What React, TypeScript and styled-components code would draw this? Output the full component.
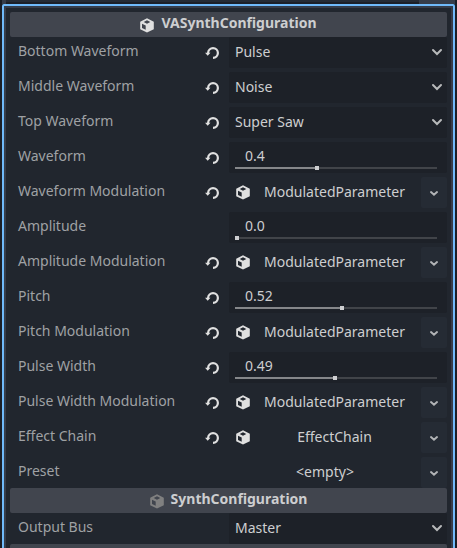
import React from "react";
import styled, { createGlobalStyle } from "styled-components";

const GlobalStyle = createGlobalStyle`
  * { box-sizing: border-box; }
  body {
    margin: 0;
    overflow: hidden;
    background: #1b1f27;
    font: 14px/20px "Noto Sans", sans-serif;
    color: #cdced0;
  }
`;

const Window = styled.div`
  width: 457px;
  height: 548px;
  overflow: hidden;
  padding: 0 2px;
  background: #1a1e26;
`;

const TabStrip = styled.div`
  height: 4px;
  display: flex;
  justify-content: space-between;
  background: linear-gradient(#252b35 50%, #1c2028 50%);
`;

const TabEdge = styled.div<{ $width: number }>`
  width: ${(p) => p.$width}px;
  background: #363d4a;
`;

const Dock = styled.main`
  height: 560px;
  border: 2px solid #70bafa;
  border-radius: 2px;
  background: #363d4a;
  padding: 2px 2px 0;
`;

const Content = styled.div`
  height: 100%;
  padding: 4px;
  background: #21262e;
`;

const Header = styled.header`
  height: 25px;
  display: flex;
  justify-content: center;
  gap: 7px;
  border-radius: 2px;
  background: #41454e;
  font-weight: 700;
  line-height: 22px;

  svg { margin-top: 6px; }
`;

const Rows = styled.section`
  display: flex;
  flex-direction: column;
  gap: 4px;
`;

const Row = styled.div`
  height: 31px;
  display: grid;
  grid-template-columns: 194px 25px 218px;
`;

const Label = styled.span`
  padding: 4px 0 0 8px;
  color: #9fa1a4;
  white-space: nowrap;
`;

const Reset = styled.span`
  height: 31px;
  display: flex;
  align-items: center;
`;

const Field = styled.div`
  height: 31px;
  border-radius: 2px;
  background: #1d2128;
  padding: 5px 4px 0 6px;
`;

const Select = styled(Field)`
  display: flex;
  justify-content: space-between;

  svg { margin-top: 2px; }
`;

const Spin = styled(Field)`
  padding: 4px 10px 0 6px;
`;

const Amount = styled.div`
  height: 20px;
  padding-left: 10px;
`;

const Track = styled.div`
  height: 2px;
  margin-top: 1px;
  display: flex;
  align-items: center;
  background: #414449;
`;

const Fill = styled.div`
  height: 2px;
  background: #85878a;
`;

const Grabber = styled.div`
  width: 4px;
  height: 4px;
  flex: none;
  background: #cdced0;
`;

const Resource = styled.div`
  display: flex;
`;

const ResourceIcon = styled.span`
  width: 24px;
  display: flex;
  align-items: center;
  padding-left: 7px;
`;

const ResourceName = styled.span<{ $empty: boolean }>`
  flex: 1;
  padding: 5px ${(p) => (p.$empty ? 0 : 5)}px 0 0;
  text-align: center;
  white-space: nowrap;
`;

const MenuButton = styled.span`
  width: 26px;
  height: 31px;
  display: flex;
  align-items: center;
  justify-content: center;
  padding-top: 1px;
  border-radius: 2px;
  background: #252b34;
`;

function Cube({ color = "#e0e0e0" }: { color?: string }) {
  return (
    <svg width="14" height="15" viewBox="0 0 14 15">
      <path
        fill={color}
        fillRule="evenodd"
        d="M7 .3 13.8 3.7v7.5L7 14.6.2 11.2V3.7zM7 2.3 3.7 4 7 5.7 10.3 4zM2 5.8v4.1l3.7 1.8V7.6z"
      />
    </svg>
  );
}

function ResetIcon() {
  return (
    <svg width="16" height="16" viewBox="0 0 16 16">
      <path fill="#e0e0e0" d="M9 2a6 6 0 0 0-6 5.7H1l2.7 3 2.8-3H5.2A3.8 3.8 0 1 1 9 11.8V14A6 6 0 0 0 9 2z" />
    </svg>
  );
}

function Chevron({ small = false }: { small?: boolean }) {
  return small ? (
    <svg width="10" height="8" viewBox="0 0 10 8">
      <path d="M2 3.1 5 5.7 8 3.1" fill="none" stroke="#b2b4b6" strokeWidth="2" strokeLinecap="round" />
    </svg>
  ) : (
    <svg width="12" height="16" viewBox="0 0 12 16">
      <path d="M2 6 6 10 10 6" fill="none" stroke="#b8babb" strokeWidth="2" strokeLinecap="round" />
    </svg>
  );
}

type Property = {
  label: string;
  kind: "select" | "number" | "resource";
  value: string;
  fill?: number;
  reset?: boolean;
};

const properties: Property[] = [
  { label: "Bottom Waveform", kind: "select", value: "Pulse", reset: true },
  { label: "Middle Waveform", kind: "select", value: "Noise", reset: true },
  { label: "Top Waveform", kind: "select", value: "Super Saw", reset: true },
  { label: "Waveform", kind: "number", value: "0.4", fill: 80, reset: true },
  { label: "Waveform Modulation", kind: "resource", value: "ModulatedParameter", reset: true },
  { label: "Amplitude", kind: "number", value: "0.0", fill: 0 },
  { label: "Amplitude Modulation", kind: "resource", value: "ModulatedParameter", reset: true },
  { label: "Pitch", kind: "number", value: "0.52", fill: 105, reset: true },
  { label: "Pitch Modulation", kind: "resource", value: "ModulatedParameter", reset: true },
  { label: "Pulse Width", kind: "number", value: "0.49", fill: 98, reset: true },
  { label: "Pulse Width Modulation", kind: "resource", value: "ModulatedParameter", reset: true },
  { label: "Effect Chain", kind: "resource", value: "EffectChain", reset: true },
  { label: "Preset", kind: "resource", value: "<empty>" },
];

function Editor({ kind, value, fill = 0 }: Property) {
  if (kind === "select") {
    return <Select>{value}<Chevron /></Select>;
  }
  if (kind === "number") {
    return (
      <Spin>
        <Amount>{value}</Amount>
        <Track>
          <Fill style={{ width: fill }} />
          <Grabber />
        </Track>
      </Spin>
    );
  }
  const empty = value === "<empty>";
  return (
    <Resource>
      {!empty && <ResourceIcon><Cube /></ResourceIcon>}
      <ResourceName $empty={empty}>{value}</ResourceName>
      <MenuButton><Chevron small /></MenuButton>
    </Resource>
  );
}

function PropertyRow(props: Property) {
  return (
    <Row>
      <Label>{props.label}</Label>
      <Reset>{props.reset && <ResetIcon />}</Reset>
      <Editor {...props} />
    </Row>
  );
}

export default function App() {
  return (
    <>
      <GlobalStyle />
      <Window>
        <TabStrip>
          <TabEdge $width={4} />
          <TabEdge $width={36} />
        </TabStrip>
        <Dock>
          <Content>
            <Header><Cube />VASynthConfiguration</Header>
            <Rows>{properties.map((p) => <PropertyRow key={p.label} {...p} />)}</Rows>
            <Header><Cube color="#808080" />SynthConfiguration</Header>
            <Rows><PropertyRow label="Output Bus" kind="select" value="Master" /></Rows>
            <Header />
          </Content>
        </Dock>
      </Window>
    </>
  );
}
